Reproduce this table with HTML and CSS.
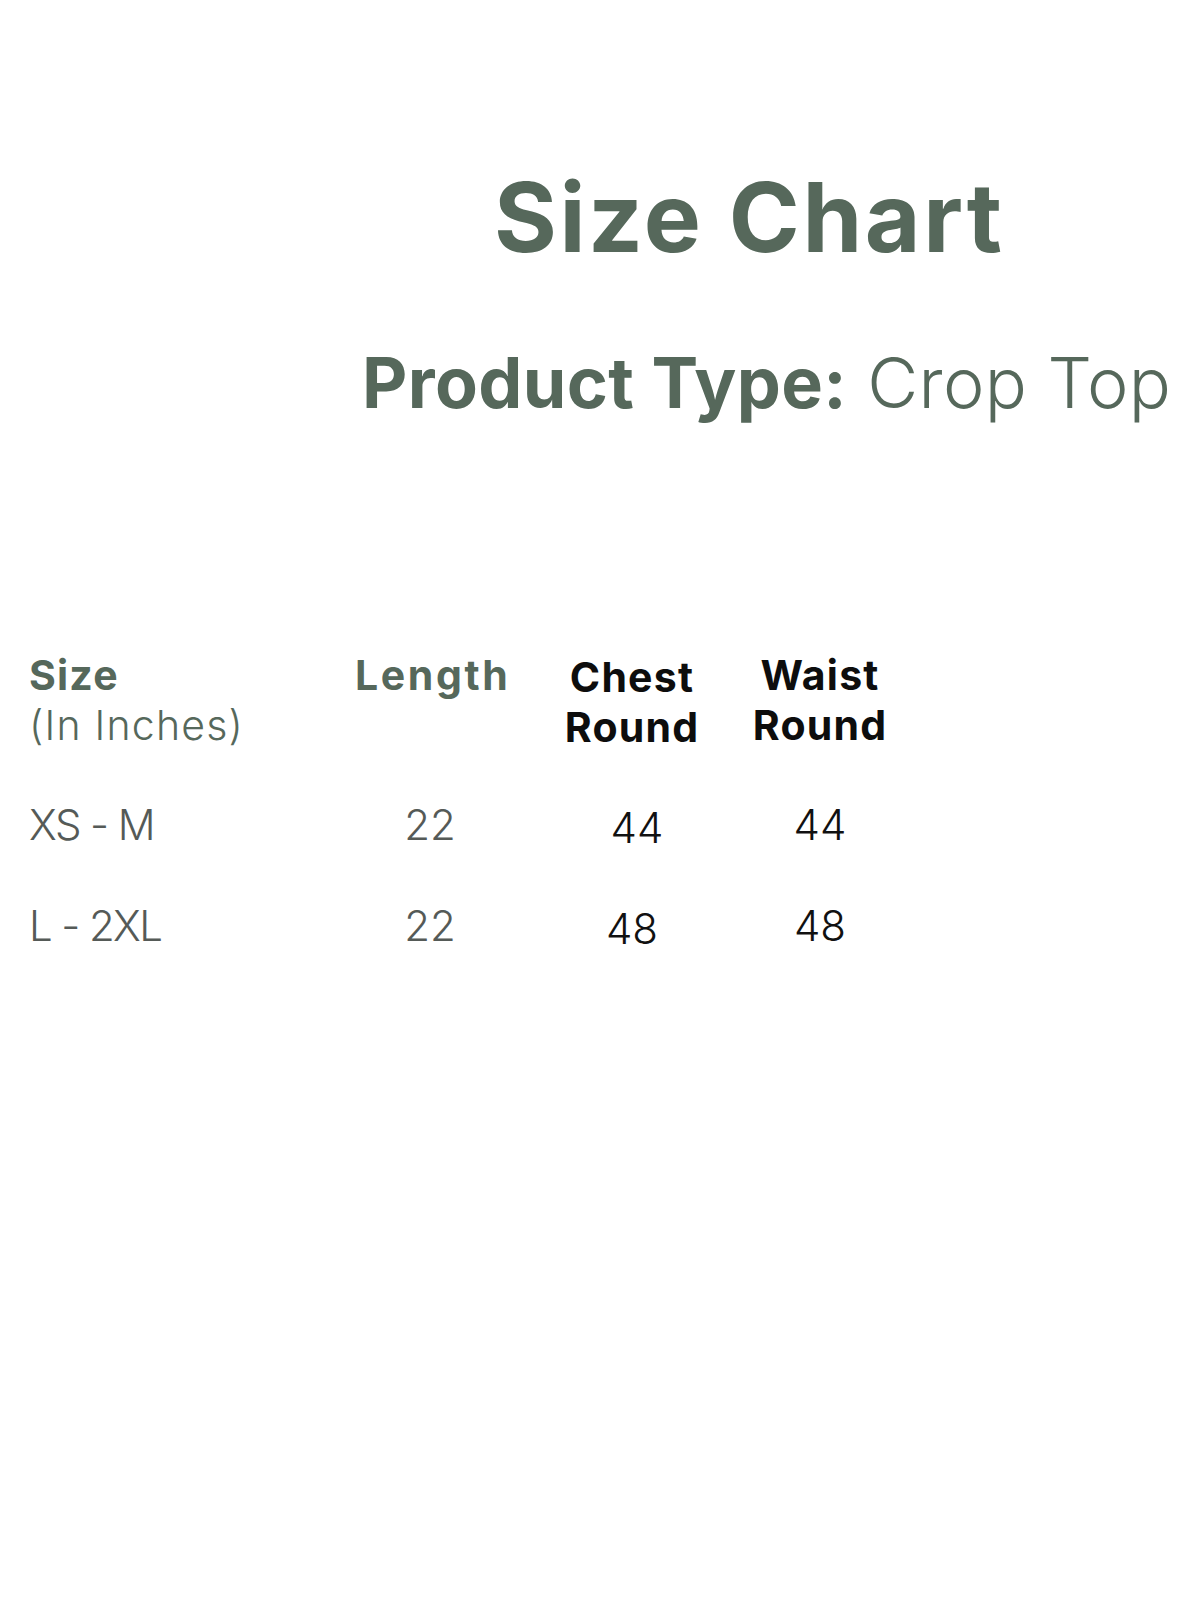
FILE: index.html
```html
<!DOCTYPE html>
<html>
<head>
<meta charset="utf-8">
<link rel="stylesheet" href="styles.css">
</head>
<body>
<div class="page">
  <header class="head">
    <h1 class="title">Size Chart</h1>
    <p class="subtitle"><span class="sub-bold">Product Type:</span> Crop Top</p>
  </header>
  <div class="chart">
    <div class="cell c1 th green">Size<br><span class="th-light">(In Inches)</span></div>
    <div class="cell c2 th green wide">Length</div>
    <div class="cell c3 th dark chest">Chest<br>Round</div>
    <div class="cell c4 th dark">Waist<br>Round</div>

    <div class="cell c1 td grey narrow">XS - M</div>
    <div class="cell c2 td grey">22</div>
    <div class="cell c3 td black low shift">44</div>
    <div class="cell c4 td black">44</div>

    <div class="cell c1 td grey narrow">L - 2XL</div>
    <div class="cell c2 td grey">22</div>
    <div class="cell c3 td black low">48</div>
    <div class="cell c4 td black">48</div>
  </div>
</div>
</body>
</html>
```

FILE: styles.css
```css
html, body {
  margin: 0;
  padding: 0;
  background: #ffffff;
}
body {
  font-family: Inter, "Noto Sans", sans-serif;
  width: 1200px;
  height: 1600px;
}
.page {
  display: flex;
  flex-direction: column;
}
.head {
  display: flex;
  flex-direction: column;
  padding-top: 169px;
}
.title {
  margin: 0 0 0 494px;
  font-size: 96px;
  line-height: 1;
  font-weight: 700;
  color: #56685b;
  letter-spacing: 2.6px;
}
.subtitle {
  margin: 83px 0 0 362px;
  font-size: 70px;
  line-height: 1;
  font-weight: 300;
  color: #56685b;
  letter-spacing: 0.4px;
}
.sub-bold {
  font-weight: 700;
}
.chart {
  margin-top: 232px;
  padding-left: 29px;
  display: grid;
  grid-template-columns: 326px 150px 202px 188px;
  row-gap: 48px;
}
.cell {
  line-height: 50px;
}
.c2 { text-align: center; }
.c3 { text-align: center; padding-left: 52px; }
.c4 { text-align: center; padding-left: 38px; }
.th {
  font-size: 41px;
  font-weight: 700;
  letter-spacing: 1.2px;
}
.th-light {
  font-weight: 300;
  letter-spacing: 1.2px;
}
.wide { letter-spacing: 2.6px; }
.green { color: #56685b; }
.dark { color: #0d0d0d; }
.chest { padding-top: 2px; }
.td {
  font-size: 42px;
  font-weight: 300;
}
.narrow { letter-spacing: -1.6px; }
.grey { color: #555a57; }
.black { color: #111111; }
.low { padding-top: 3px; }
.shift { padding-left: 62px; }
```
